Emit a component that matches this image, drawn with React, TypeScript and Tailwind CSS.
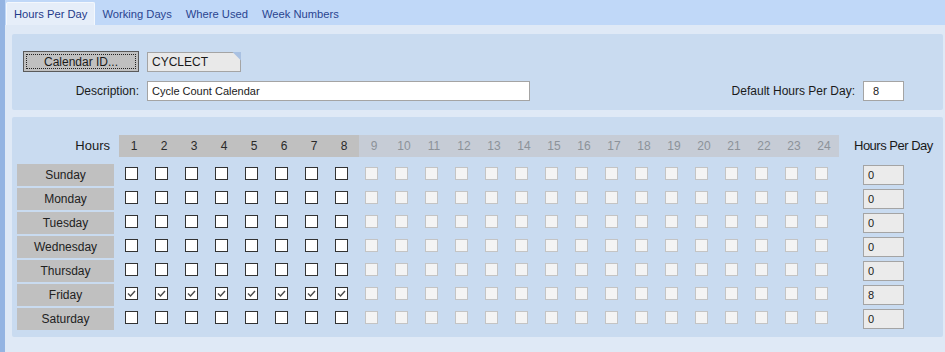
const days = ["Sunday", "Monday", "Tuesday", "Wednesday", "Thursday", "Friday", "Saturday"];
const hours = Array.from({ length: 24 }, (_, i) => i + 1);
const tabs = ["Hours Per Day", "Working Days", "Where Used", "Week Numbers"];

function Box({ enabled, checked }: { enabled: boolean; checked: boolean }) {
  if (!enabled) {
    return <span className="mt-[3px] block h-[13px] w-[13px] border border-[#c4c4c4] bg-[#f4f4f4]" />;
  }
  return (
    <span className="mt-[3px] flex h-[13px] w-[13px] items-center justify-center border border-[#333] bg-white">
      {checked && (
        <svg width="11" height="11" viewBox="0 0 11 11">
          <polyline points="2,5.5 4.5,8 9,3" fill="none" stroke="#4a4a4a" strokeWidth="1.4" />
        </svg>
      )}
    </span>
  );
}

export default function App() {
  return (
    <div
      className="flex h-[352px] w-[945px] overflow-hidden bg-[#dfe9f6] text-[12px] text-[#1a1a1a]"
      style={{ fontFamily: '"Liberation Sans", Arial, sans-serif' }}
    >
      <div className="w-[5px] shrink-0 bg-[#94b4e2]" />
      <div className="flex flex-1 flex-col">
        {/* tab strip */}
        <div className="flex h-[25px] items-end bg-[#c0d8f8] pl-[1px] text-[11.2px]">
          {tabs.map((t, i) =>
            i === 0 ? (
              <div
                key={t}
                className="flex h-[23px] items-center rounded-t-[2px] border border-b-0 border-[#f4f8fd] bg-[#e6eef9] px-[7px] text-[#1f3a8a]"
              >
                {t}
              </div>
            ) : (
              <div key={t} className="flex h-[23px] items-center px-[7px] pt-[2px] text-[#2a4590]">
                {t}
              </div>
            )
          )}
        </div>

        <div className="flex flex-col gap-[7px] pl-[7px] pr-[2px] pt-[9px]">
          {/* calendar header panel */}
          <div className="flex h-[76px] flex-col gap-[9px] rounded-[2px] bg-[#c9dbf0] pl-[11px] pr-[39px] pt-[17px]">
            <div className="flex items-center gap-[8px]">
              <button className="relative h-[21px] w-[116px] border border-[#5a5a5a] bg-[#c0c0c0] text-[12px] text-[#1a1a1a]">
                <span className="pointer-events-none absolute inset-[2px] border border-dotted border-[#222]" />
                Calendar ID...
              </button>
              <div className="relative flex h-[20px] w-[94px] items-center border border-[#a4a4a4] bg-[#e9e9e9] pl-[4px] text-[12px]">
                CYCLECT
                <span className="absolute right-[-1px] top-[-1px] h-[9px] w-[9px] bg-[#a9c1e2] [clip-path:polygon(0_0,100%_0,100%_100%)]" />
              </div>
            </div>
            <div className="flex items-center">
              <span className="w-[116px] text-right text-[12px]">Description:</span>
              <div className="ml-[8px] flex h-[20px] w-[383px] items-center border border-[#a4a4a4] bg-white pl-[4px] text-[11px]">
                Cycle Count Calendar
              </div>
              <div className="flex-1" />
              <span className="text-[12px]">Default Hours Per Day:</span>
              <div className="ml-[8px] flex h-[20px] w-[41px] items-center border border-[#a4a4a4] bg-white pl-[9px] text-[11px]">
                8
              </div>
            </div>
          </div>

          {/* hours grid panel */}
          <div className="flex h-[220px] flex-col rounded-[2px] bg-[#c9dbf0] pl-[5px] pt-[18px]">
            <div className="flex h-[22px] items-center">
              <span className="w-[93px] text-right text-[13px]">Hours</span>
              <div className="ml-[9px] flex h-[22px]">
                {hours.map((h) => (
                  <span
                    key={h}
                    className={
                      h <= 8
                        ? "flex w-[30px] items-center justify-center bg-[#c0c0c0] text-[12px] text-[#2a2a2a]"
                        : "flex w-[30px] items-center justify-center bg-[#c6ccd6] text-[12px] text-[#8c9299]"
                    }
                  >
                    {h}
                  </span>
                ))}
              </div>
              <span className="ml-[15px] text-[13px] tracking-[-0.5px]">Hours Per Day</span>
            </div>

            <div className="mt-[7px] flex flex-col gap-[2px]">
              {days.map((d) => {
                const friday = d === "Friday";
                return (
                  <div key={d} className="flex h-[22px]">
                    <span className="flex w-[97px] items-center justify-center bg-[#c0c0c0] text-[12px] text-[#222]">
                      {d}
                    </span>
                    <div className="ml-[5px] flex">
                      {hours.map((h) => (
                        <div key={h} className="w-[30px] pl-[6px]">
                          <Box enabled={h <= 8} checked={friday && h <= 8} />
                        </div>
                      ))}
                    </div>
                    <div className="ml-[24px] mt-[1px] flex h-[20px] w-[41px] items-center border border-[#a4a4a4] bg-[#ebebeb] pl-[4px] text-[11px]">
                      {friday ? "8" : "0"}
                    </div>
                  </div>
                );
              })}
            </div>
          </div>
        </div>
      </div>
    </div>
  );
}
